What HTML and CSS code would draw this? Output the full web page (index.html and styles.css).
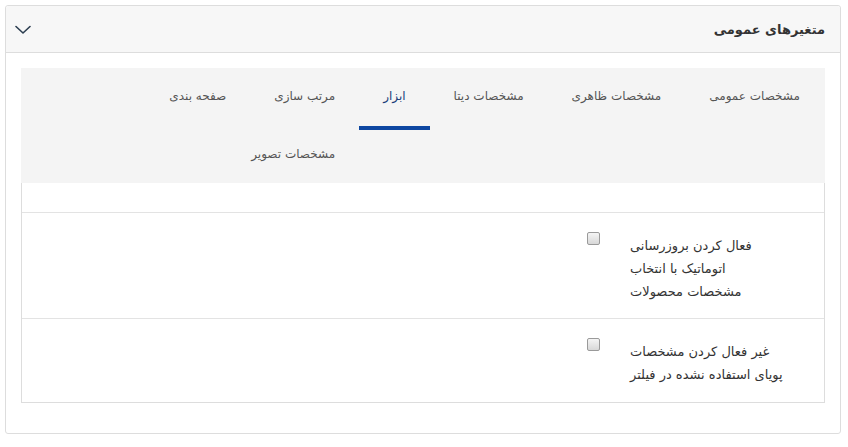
FILE: index.html
```html
<!DOCTYPE html>
<html lang="fa">
<head>
<meta charset="utf-8">
<title>متغیرهای عمومی</title>
<link rel="stylesheet" href="styles.css">
</head>
<body>
<div class="card">
  <div class="card-header" dir="rtl">
    <span class="card-title">متغیرهای عمومی</span>
    <svg class="chevron" width="16" height="10" viewBox="0 0 16 10" aria-hidden="true">
      <path d="M1 1.5 L8 8 L15 1.5" fill="none" stroke="#2c3e50" stroke-width="1.6" stroke-linecap="round" stroke-linejoin="round"/>
    </svg>
  </div>
  <div class="card-body">
    <div class="tabs-panel">
      <ul class="tabs" dir="rtl">
        <li class="tab">مشخصات عمومی</li>
        <li class="tab">مشخصات ظاهری</li>
        <li class="tab">مشخصات دیتا</li>
        <li class="tab active">ابزار</li>
        <li class="tab">مرتب سازی</li>
        <li class="tab">صفحه بندی</li>
        <li class="tab">مشخصات تصویر</li>
      </ul>
      <div class="tab-content" dir="rtl">
        <div class="row row-empty"></div>
        <div class="row">
          <div class="label">فعال کردن بروزرسانی<br>اتوماتیک با انتخاب<br>مشخصات محصولات</div>
          <div class="check"><span class="checkbox"></span></div>
        </div>
        <div class="row last">
          <div class="label">غیر فعال کردن مشخصات<br>پویای استفاده نشده در فیلتر</div>
          <div class="check"><span class="checkbox"></span></div>
        </div>
      </div>
    </div>
  </div>
</div>
</body>
</html>
```
FILE: styles.css
```css
html, body {
  margin: 0;
  padding: 0;
  background: #ffffff;
}
body {
  padding: 5px 7px 0 5px;
  font-family: "DejaVu Sans", Tahoma, sans-serif;
  color: #333333;
}
.card {
  width: 834px;
  border: 1px solid #dddddd;
  border-radius: 3px;
  background: #ffffff;
}
.card-header {
  height: 46px;
  background: #f7f7f7;
  border-bottom: 1px solid #dddddd;
  border-radius: 3px 3px 0 0;
  display: flex;
  align-items: center;
  justify-content: space-between;
  padding: 0 15px 0 9px;
}
.card-title {
  font-size: 13px;
  font-weight: bold;
  color: #333333;
}
.chevron {
  display: block;
  margin-top: 2px;
}
.card-body {
  padding: 15px 15px 30px 15px;
}
.tabs-panel {
  background: #ffffff;
}
.tabs {
  list-style: none;
  margin: 0;
  padding: 0 1px 0 0;
  background: #f4f4f4;
  display: flow-root;
}
.tab {
  float: right;
  padding: 19px 24px 19.5px;
  line-height: 19px;
  font-size: 12px;
  color: #555555;
}
.tab.active {
  color: #1b3f7a;
  border-bottom: 4px solid #0d47a1;
}
.tab-content {
  border: 1px solid #dddddd;
  border-top: none;
}
.row {
  display: flex;
  border-bottom: 1px solid #e3e3e3;
}
.row.last {
  border-bottom: none;
}
.row-empty {
  height: 29px;
}
.label {
  width: 170px;
  padding: 21px 24px 15px 0;
  line-height: 23px;
  font-size: 13px;
  text-align: left;
  color: #333333;
}
.row.last .label {
  padding-bottom: 16px;
}
.check {
  margin-right: 30px;
  padding-top: 19px;
}
.checkbox {
  display: block;
  width: 11px;
  height: 11px;
  border: 1px solid #9a9a9a;
  border-radius: 2px;
  background: linear-gradient(#f4f4f4, #d8d8d8);
}
```
